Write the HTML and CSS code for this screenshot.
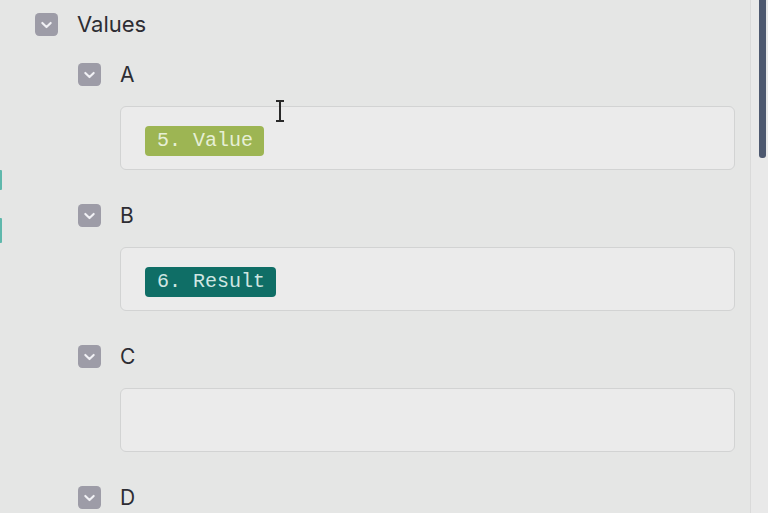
FILE: index.html
```html
<!DOCTYPE html>
<html>
<head>
<meta charset="utf-8">
<link rel="stylesheet" href="styles.css">
</head>
<body>
<div class="page">
  <div class="gutter">
    <span class="mark mark-1"></span>
    <span class="mark mark-2"></span>
  </div>
  <div class="content">
    <div class="row row-root">
      <svg class="chk" viewBox="0 0 22 22"><rect width="22" height="22" rx="4"/><path d="M7 9.5 L11 13.5 L15 9.5"/></svg>
      <span class="label">Values</span>
    </div>
    <div class="children">
      <div class="item">
        <div class="row">
          <svg class="chk" viewBox="0 0 22 22"><rect width="22" height="22" rx="4"/><path d="M7 9.5 L11 13.5 L15 9.5"/></svg>
          <span class="label">A</span>
        </div>
        <div class="box"><span class="tag tag-green">5. Value</span>
          <svg class="cursor" viewBox="0 0 10 22"><path d="M1 1 H9 M5 1 V21 M1 21 H9"/></svg>
        </div>
      </div>
      <div class="item">
        <div class="row">
          <svg class="chk" viewBox="0 0 22 22"><rect width="22" height="22" rx="4"/><path d="M7 9.5 L11 13.5 L15 9.5"/></svg>
          <span class="label">B</span>
        </div>
        <div class="box"><span class="tag tag-teal">6. Result</span></div>
      </div>
      <div class="item">
        <div class="row">
          <svg class="chk" viewBox="0 0 22 22"><rect width="22" height="22" rx="4"/><path d="M7 9.5 L11 13.5 L15 9.5"/></svg>
          <span class="label">C</span>
        </div>
        <div class="box"></div>
      </div>
      <div class="item">
        <div class="row">
          <svg class="chk" viewBox="0 0 22 22"><rect width="22" height="22" rx="4"/><path d="M7 9.5 L11 13.5 L15 9.5"/></svg>
          <span class="label">D</span>
        </div>
      </div>
    </div>
  </div>
  <div class="scrolltrack"><div class="thumb"></div></div>
</div>
</body>
</html>
```

FILE: styles.css
```css
html, body {
  margin: 0;
  padding: 0;
  height: 100%;
  overflow: hidden;
  background: #e5e6e5;
  font-family: Inter, "Liberation Sans", sans-serif;
  color: #2d2d33;
}
.page {
  display: flex;
  height: 513px;
}
.gutter {
  width: 3px;
  display: flex;
  flex-direction: column;
}
.mark {
  display: block;
  width: 2px;
  background: #5fb8ac;
  border-radius: 0 1px 1px 0;
}
.mark-1 { margin-top: 170px; height: 20px; }
.mark-2 { margin-top: 28px; height: 25px; }
.content {
  flex: 1;
  padding: 13px 15px 0 32px;
}
.row {
  display: flex;
  align-items: center;
  height: 23px;
  gap: 19px;
}
.row-root { gap: 19px; }
.chk {
  width: 23px;
  height: 23px;
  flex: none;
}
.chk rect { fill: #9d9ca7; }
.chk path {
  fill: none;
  stroke: #f1f1f5;
  stroke-width: 2;
  stroke-linecap: round;
  stroke-linejoin: round;
}
.label {
  font-size: 21px;
  line-height: 23px;
}
.row-root .label { font-size: 22px; }
.children {
  margin-left: 43px;
  margin-top: 27px;
}
.item {
  margin-bottom: 34px;
}
.box {
  position: relative;
  margin: 20px 0 0 42px;
  height: 62px;
  border: 1px solid #d2d3d3;
  border-radius: 6px;
  background: #ebebeb;
  box-sizing: content-box;
  display: flex;
  align-items: flex-start;
  padding: 0 0 0 24px;
}
.tag {
  margin-top: 19px;
  height: 30px;
  line-height: 30px;
  padding: 0 11px 0 12px;
  border-radius: 4px;
  font-family: "Liberation Mono", "DejaVu Sans Mono", monospace;
  font-size: 20px;
}
.tag-green {
  background: #9db553;
  color: #e6efd6;
}
.tag-teal {
  background: #0f6e66;
  color: #cfe6e2;
}
.cursor {
  position: absolute;
  left: 154px;
  top: -7px;
  width: 10px;
  height: 22px;
}
.cursor path {
  fill: none;
  stroke: #2a2a2a;
  stroke-width: 2;
}
.scrolltrack {
  width: 15px;
  border-left: 1px solid #dadada;
  background: #e9e9e9;
  display: flex;
  justify-content: flex-end;
  padding-right: 2px;
}
.thumb {
  width: 7px;
  height: 158px;
  background: #4d586f;
  border-radius: 0 0 3px 3px;
}
```
